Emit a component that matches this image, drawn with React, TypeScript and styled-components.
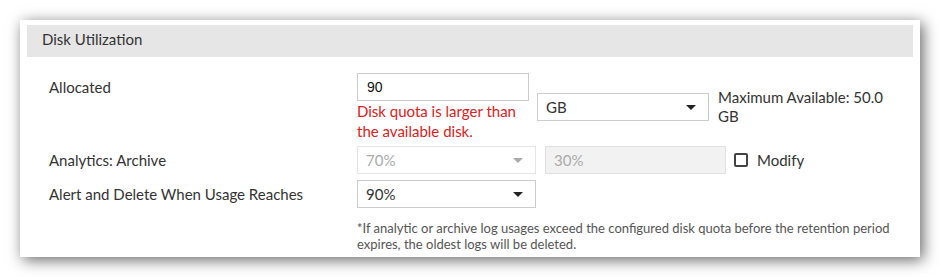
import React from "react";
import styled, { createGlobalStyle, css } from "styled-components";

const GlobalStyle = createGlobalStyle`
  html, body {
    margin: 0;
    padding: 0;
    background: #ffffff;
    font-family: Lato, "Open Sans", sans-serif;
    color: #333333;
  }
`;

const Page = styled.div`
  padding: 20px;
  width: 940px;
  height: 277px;
  box-sizing: border-box;
`;

const Card = styled.section`
  width: 900px;
  height: 237px;
  box-sizing: border-box;
  padding: 5px 7px 6px;
  background: #ffffff;
  box-shadow: 3px 3px 14px rgba(0, 0, 0, 0.6);
`;

const Header = styled.div`
  height: 32px;
  line-height: 29px;
  padding-left: 15px;
  background: #e6e6e6;
  font-size: 15px;
  color: #333333;
`;

const Body = styled.div`
  padding: 16px 0 0 22px;
`;

const Row = styled.div<{ $top?: number }>`
  display: flex;
  align-items: center;
  margin-top: ${({ $top }) => $top ?? 0}px;
`;

const Label = styled.div<{ $alignTop?: boolean }>`
  width: 308px;
  flex: none;
  font-size: 15px;
  line-height: 28px;
  color: #333333;
  ${({ $alignTop }) =>
    $alignTop &&
    css`
      align-self: flex-start;
    `}
`;

const Stack = styled.div`
  display: flex;
  flex-direction: column;
  width: 172px;
`;

const TextInput = styled.div<{ $disabled?: boolean; $width: number; $gap?: number }>`
  width: ${({ $width }) => $width}px;
  height: 28px;
  margin-left: ${({ $gap }) => $gap ?? 0}px;
  box-sizing: border-box;
  border: 1px solid ${({ $disabled }) => ($disabled ? "#e0e0e0" : "#cccccc")};
  background: ${({ $disabled }) => ($disabled ? "#f2f2f2" : "#ffffff")};
  padding: 0 8px;
  display: flex;
  align-items: center;
  font-size: 15px;
  color: ${({ $disabled }) => ($disabled ? "#aaaaaa" : "#333333")};
  flex: none;
`;

const PlainValue = styled.span`
  font-family: "Liberation Sans", Arial, sans-serif;
  font-size: 14px;
  color: #111111;
  padding-left: 1px;
`;

const Select = styled.div<{ $disabled?: boolean; $width: number; $gap?: number }>`
  width: ${({ $width }) => $width}px;
  height: 28px;
  margin-left: ${({ $gap }) => $gap ?? 0}px;
  box-sizing: border-box;
  border: 1px solid ${({ $disabled }) => ($disabled ? "#e4e4e4" : "#cccccc")};
  background: #ffffff;
  padding: 0 12px 0 8px;
  display: flex;
  align-items: center;
  justify-content: space-between;
  font-size: 15px;
  color: ${({ $disabled }) => ($disabled ? "#aaaaaa" : "#333333")};
  flex: none;
`;

const Caret = styled.span<{ $disabled?: boolean }>`
  width: 0;
  height: 0;
  border-left: 5px solid transparent;
  border-right: 5px solid transparent;
  border-top: 5px solid ${({ $disabled }) => ($disabled ? "#aaaaaa" : "#222222")};
`;

const ErrorText = styled.div`
  color: #e0201c;
  font-size: 15px;
  line-height: 20px;
  width: 180px;
`;

const Hint = styled.div`
  margin-left: 9px;
  width: 178px;
  font-size: 15px;
  line-height: 19px;
  color: #333333;
`;

const CheckRow = styled.label`
  margin-left: 8px;
  display: flex;
  align-items: center;
  gap: 9px;
  font-size: 15px;
  color: #333333;
`;

const Box = styled.span`
  width: 14px;
  height: 14px;
  box-sizing: border-box;
  border: 2px solid #444444;
  border-radius: 2px;
`;

const Note = styled.p`
  margin: 12px 0 0 308px;
  width: 540px;
  font-size: 13px;
  line-height: 16px;
  color: #555555;
`;

export default function App() {
  return (
    <Page>
      <GlobalStyle />
      <Card>
        <Header>Disk Utilization</Header>
        <Body>
          <Row>
            <Label $alignTop>Allocated</Label>
            <Stack>
              <TextInput $width={172}>
                <PlainValue>90</PlainValue>
              </TextInput>
              <ErrorText>Disk quota is larger than the available disk.</ErrorText>
            </Stack>
            <Select $width={172} $gap={8}>
              GB
              <Caret />
            </Select>
            <Hint>Maximum Available: 50.0 GB</Hint>
          </Row>
          <Row $top={5}>
            <Label>Analytics: Archive</Label>
            <Select $width={179} $disabled>
              70%
              <Caret $disabled />
            </Select>
            <TextInput $width={181} $gap={9} $disabled>
              30%
            </TextInput>
            <CheckRow>
              <Box />
              Modify
            </CheckRow>
          </Row>
          <Row $top={6}>
            <Label>Alert and Delete When Usage Reaches</Label>
            <Select $width={179}>
              90%
              <Caret />
            </Select>
          </Row>
          <Note>
            *If analytic or archive log usages exceed the configured disk quota before the retention period
            expires, the oldest logs will be deleted.
          </Note>
        </Body>
      </Card>
    </Page>
  );
}
